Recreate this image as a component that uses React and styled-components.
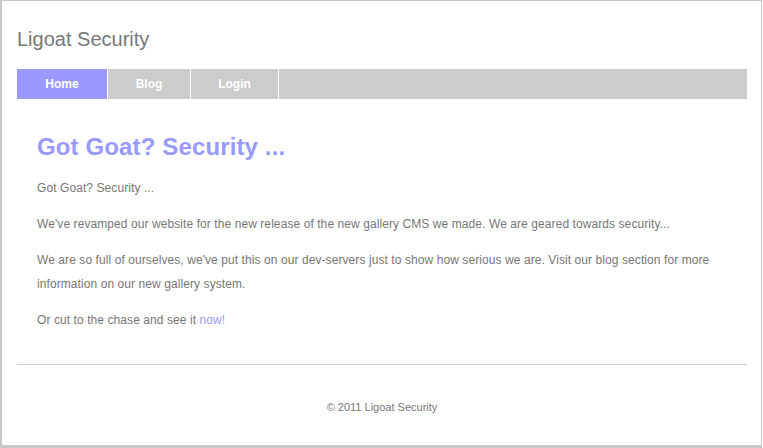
import React from 'react';
import styled, { createGlobalStyle } from "styled-components";

const GlobalStyle = createGlobalStyle`
  html, body {
    margin: 0;
    padding: 0;
    background: #fff;
  }
  body {
    font-family: "Liberation Sans", Arial, sans-serif;
  }
`;

const Frame = styled.div`
  box-sizing: border-box;
  width: 762px;
  height: 448px;
  border-top: 1px solid #c8c8c8;
  border-left: 2px solid #c8c8c8;
  border-right: 1px solid #c8c8c8;
  border-bottom: 3px solid #c8c8c8;
  padding: 0 14px 0 15px;
  overflow: hidden;
`;

const SiteTitle = styled.div`
  font-size: 20px;
  line-height: 24px;
  color: #777;
  padding: 26px 0 18px;
`;

const Nav = styled.nav`
  display: flex;
  height: 30px;
  background: #ccc;
`;

const NavItem = styled.a`
  display: flex;
  align-items: center;
  justify-content: center;
  width: ${({ w }) => w}px;
  border-right: 1px solid #fff;
  background: ${({ active }) => (active ? "#9999ff" : "#ccc")};
  color: #fff;
  font-size: 12px;
  font-weight: bold;
  text-decoration: none;
  cursor: pointer;
`;

const Main = styled.main`
  padding: 33px 20px 32px;
  border-bottom: 1px solid #ccc;
`;

const Heading = styled.h2`
  margin: 0 0 14px;
  font-size: 24px;
  line-height: 30px;
  font-weight: bold;
  letter-spacing: 0.13px;
  color: #9999ff;
`;

const Para = styled.p`
  margin: 0 0 12px;
  font-size: 12px;
  line-height: 24px;
  letter-spacing: 0.08px;
  color: #777;
  &:last-child {
    margin-bottom: 0;
  }
`;

const Link = styled.a`
  color: #9999ff;
  text-decoration: none;
`;

const Footer = styled.footer`
  text-align: center;
  font-size: 11px;
  line-height: 14px;
  color: #777;
  padding-top: 35px;
`;

const tabs = [
  { label: "Home", width: 90 },
  { label: "Blog", width: 82 },
  { label: "Login", width: 87 },
];

const App = () => {
  return (
    <>
      <GlobalStyle />
      <Frame>
        <SiteTitle>Ligoat Security</SiteTitle>
        <Nav>
          {tabs.map((tab) => (
            <NavItem key={tab.label} w={tab.width} active={tab.label === "Home"}>
              {tab.label}
            </NavItem>
          ))}
        </Nav>
        <Main>
          <Heading>Got Goat? Security ...</Heading>
          <Para>Got Goat? Security ...</Para>
          <Para>
            We've revamped our website for the new release of the new gallery CMS we made. We are geared towards security...
          </Para>
          <Para>
            We are so full of ourselves, we've put this on our dev-servers just to show how serious we are. Visit our blog section for more information on our new gallery system.
          </Para>
          <Para>
            Or cut to the chase and see it <Link>now!</Link>
          </Para>
        </Main>
        <Footer>© 2011 Ligoat Security</Footer>
      </Frame>
    </>
  );
};

export default App;
